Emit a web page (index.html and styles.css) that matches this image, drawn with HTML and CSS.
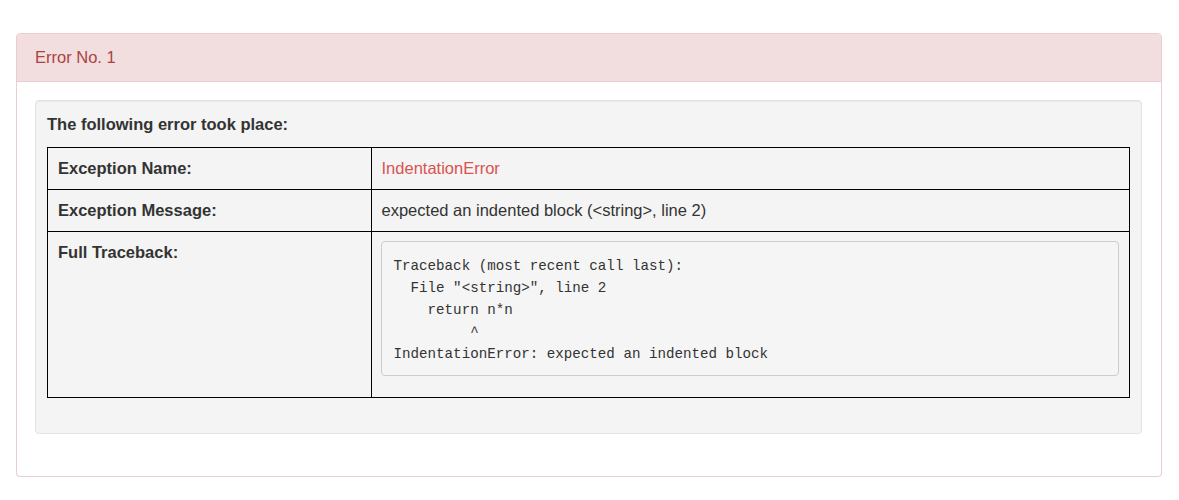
FILE: index.html
```html
<!DOCTYPE html>
<html lang="en">
<head>
<meta charset="utf-8">
<title>Error No. 1</title>
<link rel="stylesheet" href="styles.css">
</head>
<body>
<div class="page">
  <div class="panel">
    <div class="panel-heading">Error No. 1</div>
    <div class="panel-body">
      <div class="well">
        <div class="lead">The following error took place:</div>
        <table class="err-table">
          <tr>
            <th>Exception Name:</th>
            <td class="exc-name">IndentationError</td>
          </tr>
          <tr>
            <th>Exception Message:</th>
            <td>expected an indented block (&lt;string&gt;, line 2)</td>
          </tr>
          <tr>
            <th>Full Traceback:</th>
            <td class="tb-cell"><pre class="traceback">Traceback (most recent call last):
  File "&lt;string&gt;", line 2
    return n*n
         ^
IndentationError: expected an indented block</pre></td>
          </tr>
        </table>
      </div>
    </div>
  </div>
</div>
</body>
</html>
```

FILE: styles.css
```css
html, body {
  margin: 0;
  padding: 0;
  background: #ffffff;
}

body {
  font-family: "Liberation Sans", Arial, Helvetica, sans-serif;
  font-size: 16px;
  color: #333333;
}

.page {
  padding: 33px 17px 0 16px;
}

.panel {
  border: 1px solid #ebccd1;
  border-radius: 4px;
  background: #ffffff;
  box-shadow: 0 1px 1px rgba(0, 0, 0, 0.05);
}

.panel-heading {
  background: #f2dede;
  color: #a94442;
  border-bottom: 1px solid #ebccd1;
  border-radius: 3px 3px 0 0;
  padding: 12px 18px;
  line-height: 23px;
  font-size: 16.5px;
}

.panel-body {
  padding: 18px 19px 18px 18px;
}

.well {
  background: #f4f4f4;
  border: 1px solid #e3e3e3;
  border-radius: 4px;
  box-shadow: inset 0 1px 1px rgba(0, 0, 0, 0.05);
  padding: 12px 11px 12px 11px;
  margin-bottom: 24px;
}

.lead {
  font-weight: bold;
  font-size: 16.5px;
  line-height: 22px;
  margin-bottom: 12px;
}

.err-table {
  width: 100%;
  border-collapse: collapse;
  margin-bottom: 23px;
  font-size: 16.5px;
}

.err-table th,
.err-table td {
  border: 1px solid #000000;
  padding: 10px;
  line-height: 21px;
  text-align: left;
  vertical-align: top;
}

.err-table th {
  width: 29.9%;
  font-weight: bold;
}

.err-table td {
  font-weight: normal;
}

.exc-name {
  color: #d9534f;
}

.err-table td.tb-cell {
  padding: 9px 10px 10px 9px;
}

.traceback {
  margin: 0 0 11px 0;
  padding: 13px 12px 10px 12px;
  background: #f5f5f5;
  border: 1px solid #cccccc;
  border-radius: 4px;
  font-family: "Liberation Mono", Consolas, monospace;
  font-size: 14.2px;
  line-height: 22px;
  color: #333333;
  white-space: pre;
}
```
